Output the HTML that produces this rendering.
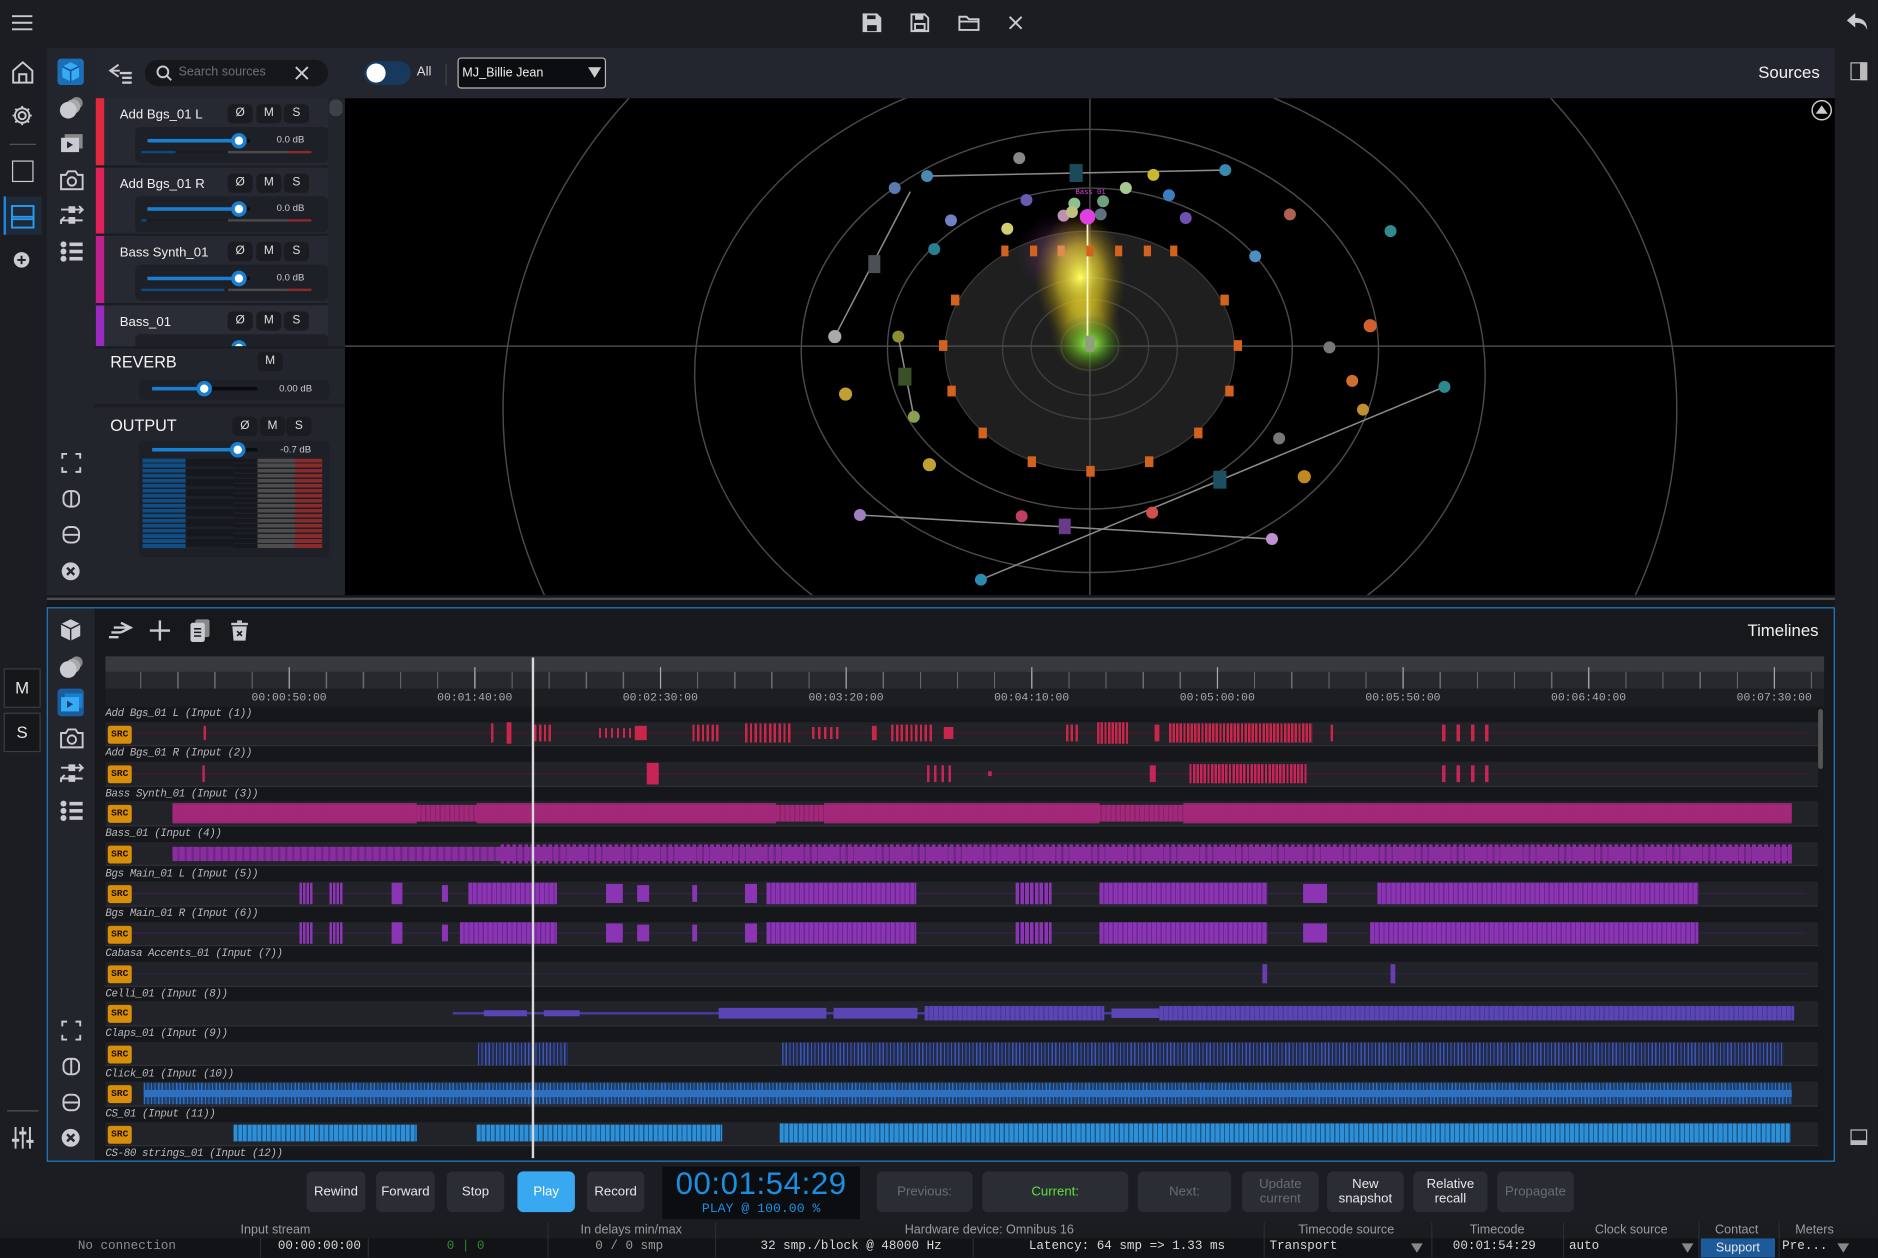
<!DOCTYPE html>
<html><head><meta charset="utf-8">
<style>
*{box-sizing:border-box;margin:0;padding:0}
html,body{width:1878px;height:1258px;overflow:hidden;background:#1b1d22}
#s{position:absolute;left:0;top:0;width:1568px;height:1050px;transform:scale(1.19770);transform-origin:0 0;background:#1b1d22;font-family:"Liberation Sans Narrow","Liberation Sans",sans-serif;color:#e8e8e8;overflow:hidden}
.a{position:absolute}
.ic{position:absolute;stroke:#c9cbd0;fill:none;stroke-width:1.6}
.btn3{position:absolute;width:21px;height:16px;background:#1a1c21;border-radius:4px;font-size:10px;text-align:center;line-height:16px;color:#ddd}
.strip{position:absolute;left:80px;width:194px;background:#262931;border-bottom:2px solid #1b1d22}
.bar{position:absolute;left:0;top:0;bottom:0;width:7px}
.nm{position:absolute;left:20px;top:8px;font-size:11px;color:#f0f0f0}
.sbox{position:absolute;left:33px;top:24px;width:161px;height:30px;background:#1e2027;border-radius:4px}
.knob{position:absolute;width:13px;height:13px;border-radius:50%;background:#fff;border:3px solid #1a7fd0}
.db{position:absolute;font-size:8px;color:#ccc}
.tl{position:absolute;left:0;width:1430px;height:33.4px}
.tl .lb{position:absolute;left:0;top:0;height:11.6px;width:100%;background:#16171b;font-family:"Liberation Mono",monospace;font-style:italic;font-size:9px;color:#b8bac0;line-height:11px;letter-spacing:-.3px}
.tl .rw{position:absolute;left:0;top:11.6px;height:20.6px;width:100%;background:#212329;border-bottom:1px solid #2e3036}
.src{position:absolute;left:2px;top:3px;width:20px;height:15px;background:#d88d0b;border-radius:2px;color:#1a1000;font-family:"Liberation Mono",monospace;font-weight:bold;font-size:8px;line-height:15px;text-align:center;z-index:2}
.w{position:absolute;top:50%;transform:translateY(-50%)}
.tb{position:absolute;top:978px;height:34px;background:#2a2d33;border-radius:5px;font-size:11px;color:#e8e8e8;text-align:center;display:flex;align-items:center;justify-content:center;line-height:12px}
.tb.d{color:#6a6d73}
.sh{position:absolute;top:1021px;font-size:10.5px;color:#9a9ca2;text-align:center}
.sv{position:absolute;top:1035px;font-family:"Liberation Mono",monospace;font-size:10.5px;color:#d8d8d8;white-space:nowrap}
</style></head><body><div id="s">

<!-- top bar -->
<svg class="ic" style="left:10px;top:12px" width="18" height="14"><path d="M0 1.5H17M0 7H17M0 12.5H17"/></svg>
<svg class="ic" style="left:720px;top:11px" width="16" height="16"><path d="M1 1H12L15 4V15H1Z M4 1V5H11V1 M4 15V10H12V15" fill="#c9cbd0" stroke="none"/><path d="M1 1H12L15 4V15H1Z"/><rect x="4" y="10" width="8" height="5" fill="#1b1d22" stroke="none"/></svg>
<svg class="ic" style="left:760px;top:11px" width="16" height="16"><path d="M1 1H12L15 4V15H1Z"/><rect x="4" y="1.5" width="7" height="4" fill="#c9cbd0" stroke="none"/><rect x="4" y="9" width="8" height="5"/></svg>
<svg class="ic" style="left:800px;top:12px" width="18" height="14"><path d="M1 2H7L9 4H17V13H1Z M1 6H17"/></svg>
<svg class="ic" style="left:842px;top:13px" width="12" height="12"><path d="M1 1L11 11M11 1L1 11"/></svg>
<svg class="a" style="left:1541px;top:10px" width="20" height="16"><path d="M8 1L1 7L8 13V9C13 9 16 10 18 15C18 9 15 5 8 5Z" fill="#c9cbd0"/></svg>

<!-- left rail -->
<svg class="ic" style="left:10px;top:51px" width="18" height="19"><path d="M1 8L9 1L17 8V18H1Z M6 18V11H12V18"/></svg>
<svg class="ic" style="left:9px;top:87px" width="19" height="19"><circle cx="9.5" cy="9.5" r="3"/><path d="M9.5 1.5V4M9.5 15V17.5M1.5 9.5H4M15 9.5H17.5M3.8 3.8L5.6 5.6M13.4 13.4L15.2 15.2M3.8 15.2L5.6 13.4M13.4 5.6L15.2 3.8"/><circle cx="9.5" cy="9.5" r="6"/></svg>
<div class="a" style="left:8px;top:120px;width:22px;height:1px;background:#555"></div>
<div class="a" style="left:10px;top:134px;width:18px;height:18px;border:1.6px solid #c9cbd0"></div>
<div class="a" style="left:3px;top:164px;width:32px;height:32px;background:#1e2a3a;border-left:2px solid #1a8ae0"></div>
<svg class="ic" style="left:9px;top:171px;stroke:#2a9bf0" width="20" height="20"><rect x="1" y="1" width="18" height="18"/><path d="M1 10H19M1 12H19"/></svg>
<svg class="a" style="left:11px;top:210px" width="14" height="14"><circle cx="7" cy="7" r="6.5" fill="#c9cbd0"/><path d="M7 3.5V10.5M3.5 7H10.5" stroke="#1b1d22" stroke-width="1.6"/></svg>
<div class="a" style="left:3px;top:558px;width:31px;height:33px;border:1px solid #3a3d44;background:#16171a;text-align:center;line-height:31px;font-size:14px">M</div>
<div class="a" style="left:3px;top:595px;width:31px;height:33px;border:1px solid #3a3d44;background:#16171a;text-align:center;line-height:31px;font-size:14px">S</div>
<div class="a" style="left:6px;top:927px;width:26px;height:1px;background:#555"></div>
<svg class="ic" style="left:9px;top:940px" width="20" height="20"><path d="M4 1V19M10 1V19M16 1V19"/><path d="M1 12H7M7 6H13M13 13H19" stroke-width="2.5"/></svg>

<!-- right rail -->
<div class="a" style="left:1545px;top:52px;width:14px;height:15px;border:1.5px solid #bbb"></div>
<div class="a" style="left:1553px;top:52px;width:6px;height:15px;background:#bbb"></div>
<div class="a" style="left:1545px;top:943px;width:14px;height:13px;border:1.5px solid #bbb;border-bottom-width:4px"></div>

<!-- sources panel -->
<div class="a" style="left:39px;top:40px;width:40px;height:457px;background:#22252c"></div>
<div class="a" style="left:79px;top:40px;width:1453px;height:42px;background:#23262e"></div>
<div class="a" style="left:1468px;top:52px;font-size:14px;font-family:'Liberation Sans',sans-serif;color:#f2f2f2">Sources</div>
<div class="a" style="left:48px;top:49px;width:22px;height:22px;background:#1a6fb8;border-radius:3px"></div>
<svg class="a" style="left:51px;top:51px" width="16" height="18"><path d="M8 1L15 4.5V13.5L8 17L1 13.5V4.5Z" fill="#35aaf5"/><path d="M1 4.5L8 8L15 4.5M8 8V17" stroke="#0d4f8a" stroke-width="1.2" fill="none"/></svg>
<svg class="a" style="left:49px;top:80px" width="22" height="20"><circle cx="15" cy="6" r="5" fill="#888"/><circle cx="12" cy="9" r="6" fill="#aaa"/><circle cx="8" cy="12" r="7" fill="#c9cbd0"/></svg>
<svg class="a" style="left:50px;top:111px" width="20" height="18"><rect x="4" y="1" width="15" height="12" fill="#888"/><rect x="1" y="4" width="15" height="12" fill="#c9cbd0"/><path d="M6 7L11 10L6 13Z" fill="#22252c"/></svg>
<svg class="ic" style="left:50px;top:141px" width="20" height="18"><path d="M1 5H5L7 2H13L15 5H19V17H1Z"/><circle cx="10" cy="10.5" r="3.5"/></svg>
<svg class="ic" style="left:50px;top:171px" width="20" height="18"><path d="M1 4H8M12 4H19L16 1M19 4L16 7M19 13H12M8 13H1V16M1 13L4 10"/><rect x="8" y="2" width="4" height="4" fill="#c9cbd0"/><rect x="8" y="11" width="4" height="4" fill="#c9cbd0"/></svg>
<svg class="a" style="left:50px;top:201px" width="20" height="18"><circle cx="3" cy="3" r="2.5" fill="#c9cbd0"/><circle cx="3" cy="9" r="2.5" fill="#c9cbd0"/><circle cx="3" cy="15" r="2.5" fill="#c9cbd0"/><rect x="8" y="1.5" width="11" height="3" fill="#c9cbd0"/><rect x="8" y="7.5" width="11" height="3" fill="#c9cbd0"/><rect x="8" y="13.5" width="11" height="3" fill="#c9cbd0"/></svg>
<svg class="ic" style="left:51px;top:378px" width="17" height="17"><path d="M1 5V1H5M12 1H16V5M16 12V16H12M5 16H1V12"/></svg>
<svg class="ic" style="left:52px;top:409px" width="15" height="15"><rect x="1" y="1" width="13" height="13" rx="5"/><path d="M7.5 1V14"/></svg>
<svg class="ic" style="left:52px;top:439px" width="15" height="15"><rect x="1" y="1" width="13" height="13" rx="5"/><path d="M1 7.5H14"/></svg>
<svg class="a" style="left:51px;top:469px" width="16" height="16"><circle cx="8" cy="8" r="7.5" fill="#c9cbd0"/><path d="M5 5L11 11M11 5L5 11" stroke="#22252c" stroke-width="2"/></svg>

<svg class="ic" style="left:90px;top:52px" width="22" height="18"><path d="M9 2L2 7L9 12M2 7H10" /><path d="M10 9H20M12 13H20M12 17H20" stroke-width="2"/></svg>
<div class="a" style="left:121px;top:50px;width:153px;height:22px;background:#15171b;border-radius:11px"></div>
<svg class="ic" style="left:130px;top:54px" width="14" height="14"><circle cx="6" cy="6" r="4.5"/><path d="M9.5 9.5L13 13"/></svg>
<div class="a" style="left:149px;top:54px;font-size:10.5px;color:#6d7078">Search sources</div>
<svg class="ic" style="left:246px;top:55px" width="12" height="12"><path d="M1 1L11 11M11 1L1 11"/></svg>
<div class="a" style="left:304px;top:51px;width:39px;height:20px;background:#173a5c;border-radius:10px"></div>
<div class="a" style="left:306px;top:53px;width:16px;height:16px;background:#fff;border-radius:50%"></div>
<div class="a" style="left:348px;top:54px;font-size:11px;color:#ddd">All</div>
<div class="a" style="left:372px;top:53px;width:1px;height:18px;background:#444"></div>
<div class="a" style="left:382px;top:48px;width:124px;height:26px;background:#0c0d10;border:1px solid #b8b8b8;border-radius:3px;font-size:10.5px;line-height:24px;padding-left:3px;color:#eee">MJ_Billie Jean</div>
<svg class="a" style="left:491px;top:56px" width="11" height="9"><path d="M0 0H11L5.5 9Z" fill="#ccc"/></svg>

<!-- source list -->
<div class="a" style="left:79px;top:82px;width:209px;height:415px;background:#22252c"></div>
<div class="a" style="left:275px;top:83px;width:11px;height:14px;background:#3e4148;border-radius:5px"></div>

<div class="strip" style="top:82px;height:58px"><div class="bar" style="background:#e0283e"></div><div class="nm">Add Bgs_01 L</div>
<div class="btn3" style="left:110px;top:5px">Ø</div><div class="btn3" style="left:134px;top:5px">M</div><div class="btn3" style="left:157px;top:5px">S</div>
<div class="sbox"></div><div class="a" style="left:43px;top:34px;width:86px;height:3px;background:#0a0b0d;border-radius:2px"><div style="width:76px;height:3px;background:#1b7fd0;border-radius:2px"></div></div><div class="knob" style="left:113px;top:29px"></div><div class="db" style="left:151px;top:30px">0.0 dB</div>
<div class="a" style="left:38px;top:44px;width:142px;height:2px;background:linear-gradient(90deg,#0e4a7d 0 20%,#1a1c20 20% 51%,#4a4a4a 51% 86%,#8a2a2a 86%)"></div></div>

<div class="strip" style="top:140px;height:57px"><div class="bar" style="background:#e02058"></div><div class="nm">Add Bgs_01 R</div>
<div class="btn3" style="left:110px;top:5px">Ø</div><div class="btn3" style="left:134px;top:5px">M</div><div class="btn3" style="left:157px;top:5px">S</div>
<div class="sbox"></div><div class="a" style="left:43px;top:33px;width:86px;height:3px;background:#0a0b0d;border-radius:2px"><div style="width:76px;height:3px;background:#1b7fd0"></div></div><div class="knob" style="left:113px;top:28px"></div><div class="db" style="left:151px;top:29px">0.0 dB</div>
<div class="a" style="left:38px;top:43px;width:142px;height:2px;background:linear-gradient(90deg,#0e4a7d 0 3%,#1a1c20 3% 51%,#4a4a4a 51% 86%,#8a2a2a 86%)"></div></div>

<div class="strip" style="top:197px;height:58px"><div class="bar" style="background:#c0208e"></div><div class="nm">Bass Synth_01</div>
<div class="btn3" style="left:110px;top:5px">Ø</div><div class="btn3" style="left:134px;top:5px">M</div><div class="btn3" style="left:157px;top:5px">S</div>
<div class="sbox"></div><div class="a" style="left:43px;top:34px;width:86px;height:3px;background:#0a0b0d;border-radius:2px"><div style="width:76px;height:3px;background:#1b7fd0"></div></div><div class="knob" style="left:113px;top:29px"></div><div class="db" style="left:151px;top:30px">0.0 dB</div>
<div class="a" style="left:38px;top:44px;width:142px;height:2px;background:linear-gradient(90deg,#0e4a7d 0 49%,#1a1c20 49% 51%,#4a4a4a 51% 86%,#8a2a2a 86%)"></div></div>

<div class="strip" style="top:255px;height:35px;overflow:hidden;border:0;background:#2a2d36"><div class="bar" style="background:#9a2ac0"></div><div class="nm">Bass_01</div>
<div class="btn3" style="left:110px;top:5px">Ø</div><div class="btn3" style="left:134px;top:5px">M</div><div class="btn3" style="left:157px;top:5px">S</div>
<div class="sbox"></div><div class="knob" style="left:113px;top:29px"></div></div>

<div class="a" style="left:79px;top:289px;width:209px;height:2px;background:#1b1d22"></div>
<div class="a" style="left:92px;top:295px;font-size:13.5px;font-family:'Liberation Sans',sans-serif;color:#f4f4f4">REVERB</div>
<div class="btn3" style="left:215px;top:294px">M</div>
<div class="a" style="left:116px;top:317px;width:159px;height:17px;background:#1e2027;border-radius:4px"></div>
<div class="a" style="left:127px;top:323px;width:88px;height:3px;background:#0a0b0d;border-radius:2px"><div style="width:44px;height:3px;background:#1b7fd0"></div></div>
<div class="knob" style="left:164px;top:318px"></div>
<div class="db" style="left:233px;top:320px">0.00 dB</div>
<div class="a" style="left:79px;top:337px;width:209px;height:3px;background:#1b1d22"></div>
<div class="a" style="left:92px;top:348px;font-size:13.5px;font-family:'Liberation Sans',sans-serif;color:#f4f4f4">OUTPUT</div>
<div class="btn3" style="left:194px;top:348px">Ø</div><div class="btn3" style="left:217px;top:348px">M</div><div class="btn3" style="left:239px;top:348px">S</div>
<div class="a" style="left:116px;top:368px;width:159px;height:97px;background:#1e2027;border-radius:4px"></div>
<div class="a" style="left:127px;top:374px;width:88px;height:3px;background:#0a0b0d;border-radius:2px"><div style="width:72px;height:3px;background:#1b7fd0"></div></div>
<div class="knob" style="left:192px;top:369px"></div>
<div class="db" style="left:234px;top:371px">-0.7 dB</div>
<div class="a" style="left:119px;top:383px;width:150px;height:75px;background:repeating-linear-gradient(180deg,transparent 0 3px,#1e2027 3px 4.2px),linear-gradient(90deg,#0f4e85 0 30%,#15181d 30% 64%,#4d4d4d 64% 85%,#8a2a2a 85%)"></div>
<div class="a" style="left:155px;top:383px;width:40px;height:75px;background:repeating-linear-gradient(180deg,#15181d 0 6px,#1e2027 6px 8.4px)"></div>

<!-- 3D view -->
<svg class="a" style="left:288px;top:82px" width="1244" height="415" viewBox="0 0 1244 415">
<defs>
<radialGradient id="gy" cx="50%" cy="50%" r="50%"><stop offset="0" stop-color="#ffff60" stop-opacity="1"/><stop offset=".5" stop-color="#e8d020" stop-opacity=".6"/><stop offset="1" stop-color="#806000" stop-opacity="0"/></radialGradient>
<radialGradient id="gg" cx="50%" cy="50%" r="50%"><stop offset="0" stop-color="#a0ff60" stop-opacity="1"/><stop offset=".5" stop-color="#40a020" stop-opacity=".5"/><stop offset="1" stop-color="#204010" stop-opacity="0"/></radialGradient>
<radialGradient id="gp" cx="50%" cy="50%" r="50%"><stop offset="0" stop-color="#c070c0" stop-opacity=".5"/><stop offset="1" stop-color="#602060" stop-opacity="0"/></radialGradient>
</defs>
<rect width="1244" height="415" fill="#000"/>
<g fill="none" stroke="#4a4a4a" stroke-width="1.2">
<ellipse cx="622" cy="260" rx="490" ry="420"/>
<ellipse cx="622" cy="230" rx="330" ry="260"/>
<ellipse cx="622" cy="211" rx="241" ry="185"/>
<ellipse cx="622" cy="209" rx="169" ry="134"/>
</g>
<ellipse cx="622" cy="211" rx="121" ry="100" fill="#1f1f1f" stroke="#3a3a3a"/>
<g fill="none" stroke="#3e3e3e" stroke-width="1.2">
<ellipse cx="622" cy="209" rx="73" ry="59"/><ellipse cx="622" cy="208" rx="49" ry="40"/><ellipse cx="622" cy="207" rx="24" ry="20"/>
</g>
<path d="M0 207H1244M622 0V415" stroke="#4a4a4a" stroke-width="1.3"/>
<ellipse cx="600" cy="130" rx="40" ry="35" fill="url(#gp)"/>
<ellipse cx="614" cy="150" rx="38" ry="55" fill="url(#gy)"/>
<ellipse cx="618" cy="190" rx="30" ry="40" fill="url(#gy)" opacity=".6"/>
<ellipse cx="622" cy="205" rx="30" ry="24" fill="url(#gg)"/>
<path d="M620 100V205" stroke="#fff8c0" stroke-width="1.5"/>
<rect x="618" y="198" width="8" height="14" rx="3" fill="#8fa07a"/>
<g fill="#d2621e">
<rect x="548" y="123" width="6" height="9"/><rect x="572" y="123" width="6" height="9"/><rect x="595" y="123" width="6" height="9" fill="#e08a50"/><rect x="619" y="123" width="6" height="9"/><rect x="643" y="123" width="6" height="9"/><rect x="667" y="123" width="6" height="9"/><rect x="689" y="123" width="6" height="9"/>
<rect x="506" y="164" width="7" height="9"/><rect x="496" y="202" width="7" height="9"/><rect x="503" y="240" width="7" height="9"/><rect x="529" y="275" width="7" height="9"/><rect x="570" y="299" width="7" height="9"/><rect x="619" y="307" width="7" height="9"/><rect x="668" y="299" width="7" height="9"/><rect x="709" y="275" width="7" height="9"/><rect x="735" y="240" width="7" height="9"/><rect x="742" y="202" width="7" height="9"/><rect x="731" y="164" width="7" height="9"/>
</g>
<g stroke="#8a8a8a" stroke-width="1.3" fill="none">
<path d="M486 65L735 60"/><path d="M472 78L409 199"/><path d="M462 199L475 266"/><path d="M430 348L774 368"/><path d="M531 402L918 241"/>
</g>
<g>
<rect x="605" y="55" width="11" height="15" fill="#1b4a5a"/>
<rect x="437" y="131" width="10" height="15" fill="#4a5055"/>
<rect x="462" y="225" width="11" height="15" fill="#3a5028"/>
<rect x="725" y="311" width="11" height="15" fill="#1a5060"/>
<rect x="596" y="351" width="10" height="13" fill="#6a3a8a"/>
</g>
<g>
<circle cx="563" cy="50" r="5" fill="#888"/><circle cx="486" cy="65" r="5" fill="#4a8ab0"/><circle cx="459" cy="75" r="5" fill="#5a7ab0"/><circle cx="675" cy="64" r="5" fill="#c8b830"/><circle cx="735" cy="60" r="5" fill="#3a8ab0"/><circle cx="652" cy="75" r="5" fill="#a8c890"/><circle cx="688" cy="81" r="5" fill="#3a80c0"/><circle cx="569" cy="85" r="5" fill="#6a5ab0"/><circle cx="506" cy="102" r="5" fill="#7080c0"/><circle cx="609" cy="88" r="5" fill="#90c090"/><circle cx="633" cy="86" r="5" fill="#70a080"/><circle cx="600" cy="98" r="5" fill="#c090b0"/><circle cx="607" cy="95" r="5" fill="#c0c080"/><circle cx="631" cy="97" r="5" fill="#607080"/><circle cx="620" cy="99" r="6.5" fill="#e040e0"/><circle cx="702" cy="100" r="5" fill="#7050b0"/><circle cx="789" cy="97" r="5" fill="#b06050"/><circle cx="873" cy="111" r="5" fill="#308a90"/><circle cx="553" cy="109" r="5" fill="#d0d070"/><circle cx="492" cy="126" r="5" fill="#2a8090"/><circle cx="760" cy="132" r="5" fill="#4a90c0"/><circle cx="409" cy="199" r="5.5" fill="#aaa"/><circle cx="462" cy="199" r="5" fill="#8a9030"/><circle cx="475" cy="266" r="5" fill="#8aa050"/><circle cx="418" cy="247" r="5.5" fill="#c0a030"/><circle cx="856" cy="190" r="5.5" fill="#d06030"/><circle cx="822" cy="208" r="5" fill="#777"/><circle cx="841" cy="236" r="5" fill="#d07030"/><circle cx="850" cy="260" r="5" fill="#c09030"/><circle cx="780" cy="284" r="5" fill="#777"/><circle cx="801" cy="316" r="5.5" fill="#c08a20"/><circle cx="488" cy="306" r="5.5" fill="#c0a030"/><circle cx="918" cy="241" r="5" fill="#2a8a90"/><circle cx="430" cy="348" r="5" fill="#a080c0"/><circle cx="565" cy="349" r="5" fill="#c04060"/><circle cx="674" cy="346" r="5" fill="#d05050"/><circle cx="774" cy="368" r="5" fill="#c090d0"/><circle cx="531" cy="402" r="5" fill="#2a8ab0"/>
</g>
<text x="610" y="80" font-family="Liberation Mono" font-size="6" fill="#e040e0">Bass 01</text>
<circle cx="1233" cy="10" r="8" fill="none" stroke="#ccc" stroke-width="1.2"/><path d="M1228 13L1233 6L1238 13Z" fill="#ccc"/>
</svg>

<!-- divider -->
<div class="a" style="left:39px;top:497px;width:1493px;height:10px;background:#16171a"></div>
<div class="a" style="left:39px;top:499px;width:1493px;height:2px;background:#4a4c52"></div>

<!-- timeline panel -->
<div class="a" style="left:39px;top:507px;width:1493px;height:463px;border:1px solid #1d85d5;background:#17181c"></div>
<div class="a" style="left:40px;top:508px;width:39px;height:461px;background:#22252c"></div>
<div class="a" style="left:1459px;top:518px;font-size:14px;font-family:'Liberation Sans',sans-serif;color:#f2f2f2">Timelines</div>
<svg class="a" style="left:50px;top:516px" width="18" height="20"><path d="M9 1L17 5V15L9 19L1 15V5Z" fill="#c9cbd0"/><path d="M1 5L9 9L17 5M9 9V19" stroke="#22252c" stroke-width="1.2" fill="none"/></svg>
<svg class="a" style="left:49px;top:547px" width="22" height="20"><circle cx="15" cy="6" r="5" fill="#888"/><circle cx="12" cy="9" r="6" fill="#aaa"/><circle cx="8" cy="12" r="7" fill="#c9cbd0"/></svg>
<div class="a" style="left:48px;top:575px;width:22px;height:23px;background:#1a5d9a;border-radius:3px"></div>
<svg class="a" style="left:50px;top:578px" width="20" height="18"><rect x="4" y="1" width="15" height="12" fill="#1b7fd0"/><rect x="1" y="4" width="15" height="12" fill="#36aaf5"/><path d="M6 7L11 10L6 13Z" fill="#0d3d6a"/></svg>
<svg class="ic" style="left:50px;top:607px" width="20" height="18"><path d="M1 5H5L7 2H13L15 5H19V17H1Z"/><circle cx="10" cy="10.5" r="3.5"/></svg>
<svg class="ic" style="left:50px;top:637px" width="20" height="18"><path d="M1 4H8M12 4H19L16 1M19 4L16 7M19 13H12M8 13H1V16M1 13L4 10"/><rect x="8" y="2" width="4" height="4" fill="#c9cbd0"/><rect x="8" y="11" width="4" height="4" fill="#c9cbd0"/></svg>
<svg class="a" style="left:50px;top:668px" width="20" height="18"><circle cx="3" cy="3" r="2.5" fill="#c9cbd0"/><circle cx="3" cy="9" r="2.5" fill="#c9cbd0"/><circle cx="3" cy="15" r="2.5" fill="#c9cbd0"/><rect x="8" y="1.5" width="11" height="3" fill="#c9cbd0"/><rect x="8" y="7.5" width="11" height="3" fill="#c9cbd0"/><rect x="8" y="13.5" width="11" height="3" fill="#c9cbd0"/></svg>
<svg class="ic" style="left:51px;top:852px" width="17" height="17"><path d="M1 5V1H5M12 1H16V5M16 12V16H12M5 16H1V12"/></svg>
<svg class="ic" style="left:52px;top:883px" width="15" height="15"><rect x="1" y="1" width="13" height="13" rx="5"/><path d="M7.5 1V14"/></svg>
<svg class="ic" style="left:52px;top:913px" width="15" height="15"><rect x="1" y="1" width="13" height="13" rx="5"/><path d="M1 7.5H14"/></svg>
<svg class="a" style="left:51px;top:942px" width="16" height="16"><circle cx="8" cy="8" r="7.5" fill="#c9cbd0"/><path d="M5 5L11 11M11 5L5 11" stroke="#22252c" stroke-width="2"/></svg>

<svg class="ic" style="left:90px;top:518px" width="21" height="17"><path d="M1 14H9M3 10H11M5 6H13M11 2L19 6L11 10M19 6H12" stroke-width="2"/></svg>
<svg class="ic" style="left:125px;top:518px" width="17" height="17"><path d="M8.5 0V17M0 8.5H17" stroke-width="2"/></svg>
<svg class="a" style="left:159px;top:517px" width="16" height="19"><rect x="4" y="0" width="12" height="15" rx="2" fill="#888"/><rect x="0" y="3" width="12" height="16" rx="2" fill="#c9cbd0"/><path d="M3 8H9M3 11H9M3 14H9" stroke="#17181c" stroke-width="1.3"/></svg>
<svg class="a" style="left:193px;top:518px" width="14" height="17"><rect x="0" y="2" width="14" height="2" fill="#c9cbd0"/><rect x="5" y="0" width="4" height="2" fill="#c9cbd0"/><path d="M1 5H13L12 17H2Z" fill="#c9cbd0"/><path d="M5 9L9 13M9 9L5 13" stroke="#17181c" stroke-width="1.3"/></svg>

<!-- ruler -->
<div class="a" style="left:88px;top:548px;width:1435px;height:13px;background:#38393e"></div>
<div class="a" style="left:88px;top:561px;width:1435px;height:14px;background:#28292e;background-image:repeating-linear-gradient(90deg,transparent 0 30px,#6a6b70 30px 31px);background-position:-1px 0"></div>
<div class="a" style="left:88px;top:575px;width:1435px;height:15px;background:#1d1e22"></div>
<div class="a" style="left:241px;top:557px;width:1px;height:18px;background:#aaa"></div><div class="a" style="left:396px;top:557px;width:1px;height:18px;background:#aaa"></div><div class="a" style="left:551px;top:557px;width:1px;height:18px;background:#aaa"></div><div class="a" style="left:706px;top:557px;width:1px;height:18px;background:#aaa"></div><div class="a" style="left:861px;top:557px;width:1px;height:18px;background:#aaa"></div><div class="a" style="left:1016px;top:557px;width:1px;height:18px;background:#aaa"></div><div class="a" style="left:1171px;top:557px;width:1px;height:18px;background:#aaa"></div><div class="a" style="left:1326px;top:557px;width:1px;height:18px;background:#aaa"></div><div class="a" style="left:1481px;top:557px;width:1px;height:18px;background:#aaa"></div>
<div class="a" style="top:577px;left:0;font-family:'Liberation Mono',monospace;font-size:9.5px;color:#a8aab0;width:1568px;height:12px">
<span class="a" style="left:210px">00:00:50:00</span><span class="a" style="left:365px">00:01:40:00</span><span class="a" style="left:520px">00:02:30:00</span><span class="a" style="left:675px">00:03:20:00</span><span class="a" style="left:830px">00:04:10:00</span><span class="a" style="left:985px">00:05:00:00</span><span class="a" style="left:1140px">00:05:50:00</span><span class="a" style="left:1295px">00:06:40:00</span><span class="a" style="left:1450px">00:07:30:00</span></div>

<!-- tracks -->
<div class="a" style="left:88px;top:591px;width:1430px;height:377px;overflow:hidden">
<div class="tl" style="top:0"><div class="lb">Add Bgs_01 L (Input (1))</div><div class="rw"><div class="src">SRC</div>
<div class="w" style="left:20px;width:1400px;height:1px;background:#4a1a28"></div>
<div class="w" style="left:82px;width:2px;height:12px;background:#c8264a"></div><div class="w" style="left:322px;width:2px;height:16px;background:#c8264a"></div><div class="w" style="left:335px;width:4px;height:18px;background:#c8264a"></div><div class="w" style="left:358px;width:14px;height:14px;background:repeating-linear-gradient(90deg,#c8264a 0 2px,transparent 2px 4px)"></div><div class="w" style="left:412px;width:30px;height:8px;background:repeating-linear-gradient(90deg,#c8264a 0 2px,transparent 2px 5px)"></div><div class="w" style="left:442px;width:10px;height:12px;background:#c8264a"></div><div class="w" style="left:490px;width:24px;height:14px;background:repeating-linear-gradient(90deg,#c8264a 0 2px,transparent 2px 4px)"></div><div class="w" style="left:534px;width:40px;height:16px;background:repeating-linear-gradient(90deg,#c8264a 0 2px,transparent 2px 4px)"></div><div class="w" style="left:590px;width:22px;height:10px;background:repeating-linear-gradient(90deg,#c8264a 0 2px,transparent 2px 5px)"></div><div class="w" style="left:640px;width:4px;height:12px;background:#c8264a"></div><div class="w" style="left:656px;width:35px;height:14px;background:repeating-linear-gradient(90deg,#c8264a 0 2px,transparent 2px 4px)"></div><div class="w" style="left:700px;width:8px;height:10px;background:#c8264a"></div><div class="w" style="left:802px;width:10px;height:14px;background:repeating-linear-gradient(90deg,#c8264a 0 2px,transparent 2px 4px)"></div><div class="w" style="left:828px;width:26px;height:18px;background:repeating-linear-gradient(90deg,#c8264a 0 2px,transparent 2px 3px)"></div><div class="w" style="left:876px;width:4px;height:14px;background:#c8264a"></div><div class="w" style="left:888px;width:120px;height:16px;background:repeating-linear-gradient(90deg,#c8264a 0 2px,transparent 2px 3px)"></div><div class="w" style="left:1023px;width:2px;height:14px;background:#c8264a"></div><div class="w" style="left:1116px;width:46px;height:14px;background:repeating-linear-gradient(90deg,#c8264a 0 3px,transparent 3px 12px)"></div>
</div></div>
<div class="tl" style="top:33.4px"><div class="lb">Add Bgs_01 R (Input (2))</div><div class="rw"><div class="src">SRC</div>
<div class="w" style="left:20px;width:1400px;height:1px;background:#4a1a30"></div>
<div class="w" style="left:81px;width:2px;height:14px;background:#c82458"></div><div class="w" style="left:452px;width:10px;height:18px;background:#c82458"></div><div class="w" style="left:686px;width:20px;height:14px;background:repeating-linear-gradient(90deg,#c82458 0 2px,transparent 2px 6px)"></div><div class="w" style="left:737px;width:3px;height:4px;background:#c82458"></div><div class="w" style="left:872px;width:5px;height:14px;background:#c82458"></div><div class="w" style="left:905px;width:98px;height:16px;background:repeating-linear-gradient(90deg,#c82458 0 2px,transparent 2px 3px)"></div><div class="w" style="left:1116px;width:46px;height:14px;background:repeating-linear-gradient(90deg,#c82458 0 3px,transparent 3px 12px)"></div>
</div></div>
<div class="tl" style="top:66.8px"><div class="lb">Bass Synth_01 (Input (3))</div><div class="rw"><div class="src">SRC</div>
<div class="w" style="left:56px;width:1352px;height:14px;background:repeating-linear-gradient(90deg,#a3287a 0 3px,#8a2268 3px 4px)"></div><div class="w" style="left:56px;width:204px;height:17px;background:#a3287a;opacity:.9"></div><div class="w" style="left:310px;width:250px;height:17px;background:#a3287a;opacity:.9"></div><div class="w" style="left:600px;width:230px;height:17px;background:#a3287a;opacity:.9"></div><div class="w" style="left:900px;width:508px;height:17px;background:#a3287a;opacity:.9"></div>
</div></div>
<div class="tl" style="top:100.2px"><div class="lb">Bass_01 (Input (4))</div><div class="rw"><div class="src">SRC</div>
<div class="w" style="left:56px;width:1352px;height:12px;background:repeating-linear-gradient(90deg,#8a2d9e 0 4px,#73268a 4px 6px)"></div><div class="w" style="left:330px;width:1078px;height:16px;background:repeating-linear-gradient(90deg,#8a2d9e 0 3px,transparent 3px 5px)"></div>
</div></div>
<div class="tl" style="top:133.6px"><div class="lb">Bgs Main_01 L (Input (5))</div><div class="rw"><div class="src">SRC</div>
<div class="w" style="left:20px;width:1400px;height:1px;background:#3a2050"></div>
<div class="w" style="left:162px;width:12px;height:18px;background:repeating-linear-gradient(90deg,#8b35b5 0 2px,transparent 2px 3px)"></div><div class="w" style="left:187px;width:11px;height:18px;background:repeating-linear-gradient(90deg,#8b35b5 0 2px,transparent 2px 3px)"></div><div class="w" style="left:239px;width:9px;height:18px;background:#8b35b5"></div><div class="w" style="left:281px;width:5px;height:14px;background:#8b35b5"></div><div class="w" style="left:303px;width:74px;height:18px;background:repeating-linear-gradient(90deg,#8b35b5 0 3px,#6a2890 3px 4px)"></div><div class="w" style="left:418px;width:14px;height:16px;background:#8b35b5"></div><div class="w" style="left:444px;width:10px;height:14px;background:#8b35b5"></div><div class="w" style="left:490px;width:4px;height:14px;background:#8b35b5"></div><div class="w" style="left:534px;width:10px;height:16px;background:#8b35b5"></div><div class="w" style="left:552px;width:125px;height:18px;background:repeating-linear-gradient(90deg,#8b35b5 0 3px,#6a2890 3px 4px)"></div><div class="w" style="left:760px;width:30px;height:18px;background:repeating-linear-gradient(90deg,#8b35b5 0 3px,transparent 3px 4px)"></div><div class="w" style="left:830px;width:140px;height:18px;background:repeating-linear-gradient(90deg,#8b35b5 0 3px,#6a2890 3px 4px)"></div><div class="w" style="left:1000px;width:20px;height:16px;background:#8b35b5"></div><div class="w" style="left:1062px;width:268px;height:18px;background:repeating-linear-gradient(90deg,#8b35b5 0 3px,#6a2890 3px 4px)"></div>
</div></div>
<div class="tl" style="top:167px"><div class="lb">Bgs Main_01 R (Input (6))</div><div class="rw"><div class="src">SRC</div>
<div class="w" style="left:20px;width:1400px;height:1px;background:#3a2050"></div>
<div class="w" style="left:162px;width:12px;height:18px;background:repeating-linear-gradient(90deg,#8b35b5 0 2px,transparent 2px 3px)"></div><div class="w" style="left:187px;width:11px;height:18px;background:repeating-linear-gradient(90deg,#8b35b5 0 2px,transparent 2px 3px)"></div><div class="w" style="left:239px;width:9px;height:18px;background:#8b35b5"></div><div class="w" style="left:281px;width:5px;height:14px;background:#8b35b5"></div><div class="w" style="left:296px;width:81px;height:18px;background:repeating-linear-gradient(90deg,#8b35b5 0 3px,#6a2890 3px 4px)"></div><div class="w" style="left:418px;width:14px;height:16px;background:#8b35b5"></div><div class="w" style="left:444px;width:10px;height:14px;background:#8b35b5"></div><div class="w" style="left:490px;width:4px;height:14px;background:#8b35b5"></div><div class="w" style="left:534px;width:10px;height:16px;background:#8b35b5"></div><div class="w" style="left:552px;width:125px;height:18px;background:repeating-linear-gradient(90deg,#8b35b5 0 3px,#6a2890 3px 4px)"></div><div class="w" style="left:760px;width:30px;height:18px;background:repeating-linear-gradient(90deg,#8b35b5 0 3px,transparent 3px 4px)"></div><div class="w" style="left:830px;width:140px;height:18px;background:repeating-linear-gradient(90deg,#8b35b5 0 3px,#6a2890 3px 4px)"></div><div class="w" style="left:1000px;width:20px;height:16px;background:#8b35b5"></div><div class="w" style="left:1056px;width:274px;height:18px;background:repeating-linear-gradient(90deg,#8b35b5 0 3px,#6a2890 3px 4px)"></div>
</div></div>
<div class="tl" style="top:200.4px"><div class="lb">Cabasa Accents_01 (Input (7))</div><div class="rw"><div class="src">SRC</div>
<div class="w" style="left:20px;width:1400px;height:1px;background:#2c2440"></div>
<div class="w" style="left:966px;width:4px;height:16px;background:#6b3bb0"></div><div class="w" style="left:1073px;width:4px;height:16px;background:#6b3bb0"></div>
</div></div>
<div class="tl" style="top:233.8px"><div class="lb">Celli_01 (Input (8))</div><div class="rw"><div class="src">SRC</div>
<div class="w" style="left:290px;width:1120px;height:2px;background:#4a3aa0"></div>
<div class="w" style="left:316px;width:36px;height:5px;background:#5b45b5"></div><div class="w" style="left:366px;width:30px;height:5px;background:#5b45b5"></div><div class="w" style="left:512px;width:90px;height:9px;background:#5b45b5"></div><div class="w" style="left:608px;width:70px;height:9px;background:#5b45b5"></div><div class="w" style="left:684px;width:150px;height:12px;background:repeating-linear-gradient(90deg,#5b45b5 0 3px,#4a3aa0 3px 4px)"></div><div class="w" style="left:840px;width:40px;height:8px;background:#5b45b5"></div><div class="w" style="left:880px;width:530px;height:12px;background:repeating-linear-gradient(90deg,#5b45b5 0 3px,#4a3aa0 3px 4px)"></div>
</div></div>
<div class="tl" style="top:267.2px"><div class="lb">Claps_01 (Input (9))</div><div class="rw"><div class="src">SRC</div>
<div class="w" style="left:311px;width:75px;height:19px;background:repeating-linear-gradient(90deg,#3c55b5 0 1px,#222a48 1px 3px)"></div><div class="w" style="left:565px;width:836px;height:19px;background:repeating-linear-gradient(90deg,#3c55b5 0 1px,#222a48 1px 3px)"></div>
</div></div>
<div class="tl" style="top:300.6px"><div class="lb">Click_01 (Input (10))</div><div class="rw"><div class="src">SRC</div>
<div class="w" style="left:32px;width:1376px;height:18px;background:repeating-linear-gradient(90deg,#2f6fc0 0 1px,#1e3e6a 1px 3px)"></div><div class="w" style="left:32px;width:1376px;height:6px;background:#2f6fc0"></div>
</div></div>
<div class="tl" style="top:334px"><div class="lb">CS_01 (Input (11))</div><div class="rw"><div class="src">SRC</div>
<div class="w" style="left:107px;width:153px;height:14px;background:repeating-linear-gradient(90deg,#2d8fd8 0 3px,#1c5a8a 3px 4px)"></div><div class="w" style="left:310px;width:205px;height:14px;background:repeating-linear-gradient(90deg,#2d8fd8 0 3px,#1c5a8a 3px 4px)"></div><div class="w" style="left:563px;width:844px;height:16px;background:repeating-linear-gradient(90deg,#2d8fd8 0 3px,#1c5a8a 3px 4px)"></div>
</div></div>
<div class="tl" style="top:367.4px"><div class="lb">CS-80 strings_01 (Input (12))</div></div>
</div>
<div class="a" style="left:444px;top:549px;width:2px;height:418px;background:#d8d8d8"></div>
<div class="a" style="left:1518px;top:592px;width:4px;height:50px;background:#555;border-radius:2px"></div>

<!-- transport -->
<div class="tb" style="left:256px;width:49px">Rewind</div>
<div class="tb" style="left:314px;width:49px">Forward</div>
<div class="tb" style="left:373px;width:48px">Stop</div>
<div class="tb" style="left:432px;width:48px;background:#38a8f0;color:#fff">Play</div>
<div class="tb" style="left:490px;width:48px">Record</div>
<div class="a" style="left:553px;top:974px;width:165px;height:44px;background:#0c0d10"></div>
<div class="a" style="left:553px;top:973px;width:165px;text-align:center;font-family:'Liberation Sans',sans-serif;font-size:26px;color:#1a8fe0;letter-spacing:.5px">00:01:54:29</div>
<div class="a" style="left:553px;top:1004px;width:165px;text-align:center;font-family:'Liberation Mono',monospace;font-size:11px;color:#1a8fe0">PLAY @ 100.00 %</div>
<div class="tb d" style="left:732px;width:80px">Previous:</div>
<div class="tb" style="left:820px;width:122px;color:#60e040">Current:</div>
<div class="tb d" style="left:950px;width:78px">Next:</div>
<div class="tb d" style="left:1037px;width:64px">Update<br>current</div>
<div class="tb" style="left:1108px;width:64px">New<br>snapshot</div>
<div class="tb" style="left:1180px;width:62px">Relative<br>recall</div>
<div class="tb d" style="left:1250px;width:64px">Propagate</div>

<!-- status -->
<div class="a" style="left:0;top:1020px;width:1568px;height:14px;background:#1a1c20"></div>
<div class="a" style="left:0;top:1034px;width:1568px;height:16px;background:#121316"></div>
<div class="sh" style="left:170px;width:120px">Input stream</div>
<div class="sh" style="left:467px;width:120px">In delays min/max</div>
<div class="sh" style="left:726px;width:200px">Hardware device: Omnibus 16</div>
<div class="sh" style="left:1064px;width:120px">Timecode source</div>
<div class="sh" style="left:1200px;width:100px">Timecode</div>
<div class="sh" style="left:1312px;width:100px">Clock source</div>
<div class="sh" style="left:1420px;width:60px">Contact</div>
<div class="sh" style="left:1490px;width:50px">Meters</div>
<div class="a" style="left:217px;top:1034px;width:1px;height:16px;background:#2a2c31"></div><div class="a" style="left:307px;top:1034px;width:1px;height:16px;background:#2a2c31"></div><div class="a" style="left:457px;top:1020px;width:1px;height:30px;background:#2a2c31"></div><div class="a" style="left:597px;top:1020px;width:1px;height:30px;background:#2a2c31"></div><div class="a" style="left:812px;top:1034px;width:1px;height:16px;background:#2a2c31"></div><div class="a" style="left:1055px;top:1020px;width:1px;height:30px;background:#2a2c31"></div><div class="a" style="left:1195px;top:1020px;width:1px;height:30px;background:#2a2c31"></div><div class="a" style="left:1305px;top:1020px;width:1px;height:30px;background:#2a2c31"></div><div class="a" style="left:1418px;top:1020px;width:1px;height:30px;background:#2a2c31"></div><div class="a" style="left:1485px;top:1020px;width:1px;height:30px;background:#2a2c31"></div>
<div class="sv" style="left:65px;color:#8a8c92">No connection</div>
<div class="sv" style="left:232px">00:00:00:00</div>
<div class="sv" style="left:373px;color:#2a8a2a">0 | 0</div>
<div class="sv" style="left:497px;color:#999">0 / 0 smp</div>
<div class="sv" style="left:635px">32 smp./block @ 48000 Hz</div>
<div class="sv" style="left:859px">Latency: 64 smp =&gt; 1.33 ms</div>
<div class="sv" style="left:1060px">Transport</div>
<svg class="a" style="left:1178px;top:1038px" width="10" height="8"><path d="M0 0H10L5 8Z" fill="#888"/></svg>
<div class="sv" style="left:1213px">00:01:54:29</div>
<div class="sv" style="left:1310px">auto</div>
<svg class="a" style="left:1404px;top:1038px" width="10" height="8"><path d="M0 0H10L5 8Z" fill="#888"/></svg>
<div class="a" style="left:1420px;top:1034px;width:62px;height:16px;background:#1d5a9a;font-size:10.5px;text-align:center;line-height:16px;color:#e8e8e8">Support</div>
<div class="sv" style="left:1488px">Pre...</div>
<svg class="a" style="left:1534px;top:1038px" width="10" height="8"><path d="M0 0H10L5 8Z" fill="#888"/></svg>

</div></body></html>
